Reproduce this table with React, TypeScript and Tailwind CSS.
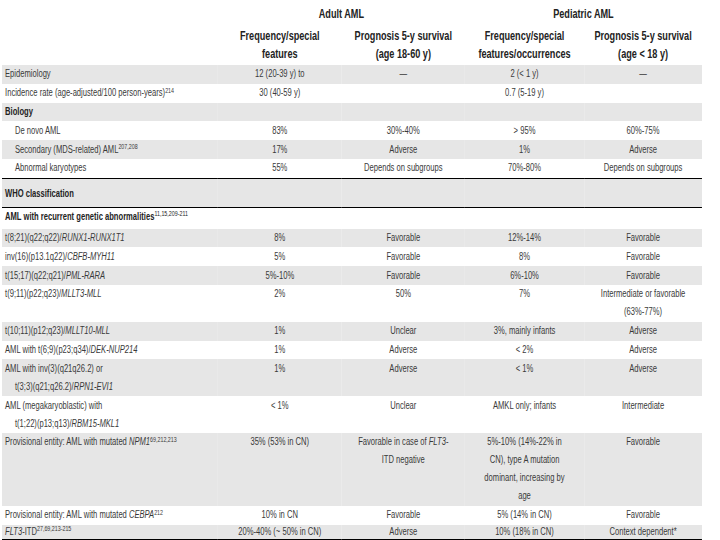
import React from "react";

type Cell = React.ReactNode;

const Sup = ({ children }: { children: React.ReactNode }) => (
  <sup className="text-[7px] font-normal">{children}</sup>
);

function Row({
  cells,
  gray,
  indent = "pl-[4px]",
  border,
  bold,
  last,
}: {
  cells: Cell[];
  gray?: boolean;
  indent?: string;
  border?: boolean;
  bold?: boolean;
  last?: boolean;
}) {
  const bg = gray ? "bg-[#e6e6e6]" : "bg-white";
  const bd = border ? "border-b-[1.5px] border-black" : "";
  const lh = last ? "leading-[14px] py-0" : "leading-[18px] py-[0.4px]";
  return (
    <tr className={bg}>
      <td
        className={`${indent} ${bd} ${lh} text-left align-top whitespace-nowrap ${
          bold ? "font-bold text-[#222]" : ""
        }`}
      >
        {cells[0]}
      </td>
      {[1, 2, 3, 4].map((i) => (
        <td key={i} className={`${bd} ${lh} text-center align-top whitespace-nowrap`}>
          {cells[i] ?? ""}
        </td>
      ))}
    </tr>
  );
}

export default function App() {
  return (
    <div className="w-[720px] h-[540px] overflow-hidden bg-white pl-[2px] font-['Liberation_Sans',Arial,sans-serif] text-[10px] text-[#3a3a3a]">
      <div className="w-[921px] origin-top-left scale-x-[0.76]">
        <table className="w-[921px] table-fixed border-collapse">
          <colgroup>
            <col className="w-[284px]" />
            <col className="w-[163px]" />
            <col className="w-[162px]" />
            <col className="w-[157px]" />
            <col className="w-[155px]" />
          </colgroup>
          <thead className="text-[12px] font-bold text-[#222]">
            <tr className="h-[27px]">
              <th />
              <th colSpan={2} className="align-middle text-center">
                Adult AML
              </th>
              <th colSpan={2} className="align-middle text-center">
                Pediatric AML
              </th>
            </tr>
            <tr>
              <th />
              <th className="align-top text-center leading-[18px] pb-[2px]">
                Frequency/special
                <br />
                features
              </th>
              <th className="align-top text-center leading-[18px] pb-[2px]">
                Prognosis 5-y survival
                <br />
                (age 18-60 y)
              </th>
              <th className="align-top text-center leading-[18px] pb-[2px]">
                Frequency/special
                <br />
                features/occurrences
              </th>
              <th className="align-top text-center leading-[18px] pb-[2px]">
                Prognosis 5-y survival
                <br />
                (age &lt; 18 y)
              </th>
            </tr>
          </thead>
          <tbody>
            <Row gray cells={["Epidemiology", "12 (20-39 y) to", "—", "2 (< 1 y)", "—"]} />
            <Row
              cells={[
                <>
                  Incidence rate (age-adjusted/100 person-years)<Sup>214</Sup>
                </>,
                "30 (40-59 y)",
                "",
                "0.7 (5-19 y)",
                "",
              ]}
            />
            <Row gray bold cells={["Biology"]} />
            <Row indent="pl-[17px]" cells={["De novo AML", "83%", "30%-40%", "> 95%", "60%-75%"]} />
            <Row
              gray
              indent="pl-[17px]"
              cells={[
                <>
                  Secondary (MDS-related) AML<Sup>207,208</Sup>
                </>,
                "17%",
                "Adverse",
                "1%",
                "Adverse",
              ]}
            />
            <Row
              border
              indent="pl-[17px]"
              cells={["Abnormal karyotypes", "55%", "Depends on subgroups", "70%-80%", "Depends on subgroups"]}
            />
            <tr className="bg-[#e6e6e6]">
              <td className="pl-[4px] pt-[8px] pb-[6px] leading-[14px] align-top font-bold text-[#222] border-b-[1.5px] border-black">
                WHO classification
              </td>
              <td className="border-b-[1.5px] border-black" />
              <td className="border-b-[1.5px] border-black" />
              <td className="border-b-[1.5px] border-black" />
              <td className="border-b-[1.5px] border-black" />
            </tr>
            <tr className="bg-white">
              <td className="pl-[4px] pb-[3px] align-top leading-[18px] font-bold text-[#222] whitespace-nowrap">
                AML with recurrent genetic abnormalities<Sup>11,15,209-211</Sup>
              </td>
              <td />
              <td />
              <td />
              <td />
            </tr>
            <Row
              gray
              cells={[
                <>
                  t(8;21)(q22;q22)/<i>RUNX1-RUNX1T1</i>
                </>,
                "8%",
                "Favorable",
                "12%-14%",
                "Favorable",
              ]}
            />
            <Row
              cells={[
                <>
                  inv(16)(p13.1q22)/<i>CBFB-MYH11</i>
                </>,
                "5%",
                "Favorable",
                "8%",
                "Favorable",
              ]}
            />
            <Row
              gray
              cells={[
                <>
                  t(15;17)(q22;q21)/<i>PML-RARA</i>
                </>,
                "5%-10%",
                "Favorable",
                "6%-10%",
                "Favorable",
              ]}
            />
            <Row
              cells={[
                <>
                  t(9;11)(p22;q23)/<i>MLLT3-MLL</i>
                </>,
                "2%",
                "50%",
                "7%",
                <>
                  Intermediate or favorable
                  <br />
                  (63%-77%)
                </>,
              ]}
            />
            <Row
              gray
              cells={[
                <>
                  t(10;11)(p12;q23)/<i>MLLT10-MLL</i>
                </>,
                "1%",
                "Unclear",
                "3%, mainly infants",
                "Adverse",
              ]}
            />
            <Row
              cells={[
                <>
                  AML with t(6;9)(p23;q34)/<i>DEK-NUP214</i>
                </>,
                "1%",
                "Adverse",
                "< 2%",
                "Adverse",
              ]}
            />
            <Row
              gray
              cells={[
                <>
                  AML with inv(3)(q21q26.2) or
                  <br />
                  <span className="pl-[13px]">
                    t(3;3)(q21;q26.2)/<i>RPN1-EVI1</i>
                  </span>
                </>,
                "1%",
                "Adverse",
                "< 1%",
                "Adverse",
              ]}
            />
            <Row
              cells={[
                <>
                  AML (megakaryoblastic) with
                  <br />
                  <span className="pl-[13px]">
                    t(1;22)(p13;q13)/<i>RBM15-MKL1</i>
                  </span>
                </>,
                "< 1%",
                "Unclear",
                "AMKL only; infants",
                "Intermediate",
              ]}
            />
            <Row
              gray
              cells={[
                <>
                  Provisional entity: AML with mutated <i>NPM1</i>
                  <Sup>69,212,213</Sup>
                </>,
                "35% (53% in CN)",
                <>
                  Favorable in case of <i>FLT3</i>-
                  <br />
                  ITD negative
                </>,
                <>
                  5%-10% (14%-22% in
                  <br />
                  CN), type A mutation
                  <br />
                  dominant, increasing by
                  <br />
                  age
                </>,
                "Favorable",
              ]}
            />
            <Row
              cells={[
                <>
                  Provisional entity: AML with mutated <i>CEBPA</i>
                  <Sup>212</Sup>
                </>,
                "10% in CN",
                "Favorable",
                "5% (14% in CN)",
                "Favorable",
              ]}
            />
            <Row
              gray
              border
              last
              cells={[
                <>
                  <i>FLT3</i>-ITD<Sup>27,69,213-215</Sup>
                </>,
                "20%-40% (~ 50% in CN)",
                "Adverse",
                "10% (18% in CN)",
                "Context dependent*",
              ]}
            />
          </tbody>
        </table>
      </div>
    </div>
  );
}
